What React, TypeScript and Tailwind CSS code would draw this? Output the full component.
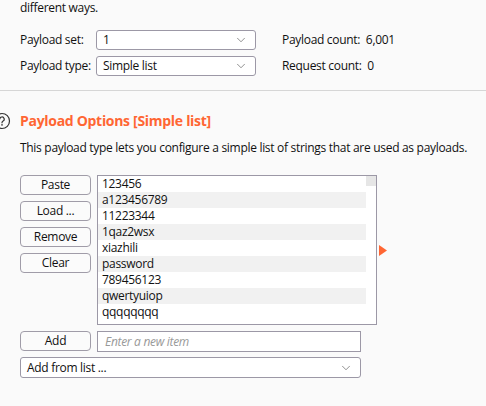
import { ChevronDown } from "lucide-react";

const items = [
  "123456",
  "a123456789",
  "11223344",
  "1qaz2wsx",
  "xiazhili",
  "password",
  "789456123",
  "qwertyuiop",
  "qqqqqqqq",
];

const font = { fontFamily: '"Open Sans", "Noto Sans", sans-serif' };

function Select({ value, className }: { value: string; className: string }) {
  return (
    <div
      className={`flex items-center justify-between rounded-[3px] border border-[#9c98a6] bg-white pl-[6px] pr-[7px] ${className}`}
    >
      <span>{value}</span>
      <ChevronDown size={14} strokeWidth={1.1} className="text-[#555]" />
    </div>
  );
}

function Btn({ label }: { label: string }) {
  return (
    <button className="flex h-[20px] w-[71px] items-center justify-center rounded-[4px] border border-[#a09ca8] bg-[#fbfbfb] text-[12px] text-[#111]">
      {label}
    </button>
  );
}

export default function App() {
  return (
    <div
      className="h-[406px] w-[486px] overflow-hidden bg-[#fafafa] text-[12px] leading-[16px] tracking-[-0.3px] text-[#111]"
      style={font}
    >
      <div className="px-[20px]">
        <p>different ways.</p>
        {/* payload set/type */}
        <div className="mt-[14px] flex flex-col gap-[6px]">
          <div className="flex items-center">
            <span className="w-[76px]">Payload set:</span>
            <Select value="1" className="h-[20px] w-[160px]" />
            <span className="ml-[26px]">Payload count:&nbsp; 6,001</span>
          </div>
          <div className="flex items-center">
            <span className="w-[76px]">Payload type:</span>
            <Select value="Simple list" className="h-[20px] w-[160px]" />
            <span className="ml-[26px]">Request count:&nbsp; 0</span>
          </div>
        </div>
      </div>

      <div className="mt-[14px] h-px w-full bg-[#d6d6d6]" />

      {/* heading */}
      <div className="relative mt-[22px] flex items-center pl-[20px]">
        <svg
          className="absolute left-[-7px] top-[-1px]"
          width="18"
          height="18"
          viewBox="0 0 18 18"
        >
          <circle cx="9" cy="9" r="7.5" fill="none" stroke="#333" strokeWidth="1.2" />
          <path
            d="M6.8 7.2a2.2 2.2 0 1 1 3.3 1.9c-.7.4-1.1.8-1.1 1.6v.5"
            fill="none"
            stroke="#333"
            strokeWidth="1.2"
          />
          <circle cx="9" cy="12.9" r="0.8" fill="#333" />
        </svg>
        <h2 className="text-[14px] font-bold leading-[16px] tracking-[-0.3px] text-[#ff6633]">
          Payload Options [Simple list]
        </h2>
      </div>
      <p className="mt-[11px] whitespace-nowrap pl-[20px]">
        This payload type lets you configure a simple list of strings that are used as payloads.
      </p>

      {/* list area */}
      <div className="mt-[19px] flex gap-[6px] pl-[20px]">
        <div className="flex flex-col gap-[6px]">
          <Btn label="Paste" />
          <Btn label="Load ..." />
          <Btn label="Remove" />
          <Btn label="Clear" />
        </div>
        <div className="flex h-[150px] w-[280px] border border-[#9c98a6] bg-white">
          <div className="flex-1 overflow-hidden">
            {items.map((it, i) => (
              <div
                key={it}
                className={`h-[16px] pl-[4px] text-[12px] leading-[16px] ${
                  i % 2 === 1 ? "bg-[#f1f1f1]" : "bg-white"
                }`}
              >
                {it}
              </div>
            ))}
          </div>
          <div className="w-[10px] bg-white">
            <div className="h-[10px] w-full bg-[#e6e6e6]" />
          </div>
        </div>
        <div className="flex items-center">
          <svg width="9" height="11" viewBox="0 0 9 11" className="-ml-[4px]">
            <path d="M0 0 L8 5.5 L0 11 Z" fill="#ff6633" />
          </svg>
        </div>
      </div>

      {/* add row */}
      <div className="mt-[6px] flex gap-[6px] pl-[20px]">
        <Btn label="Add" />
        <input
          placeholder="Enter a new item"
          className="h-[21px] w-[264px] border border-[#9c98a6] bg-white px-[7px] text-[12px] italic outline-none placeholder:text-[#999]"
        />
      </div>
      <div className="mt-[5px] pl-[20px]">
        <Select value="Add from list ..." className="h-[21px] w-[341px]" />
      </div>
    </div>
  );
}
